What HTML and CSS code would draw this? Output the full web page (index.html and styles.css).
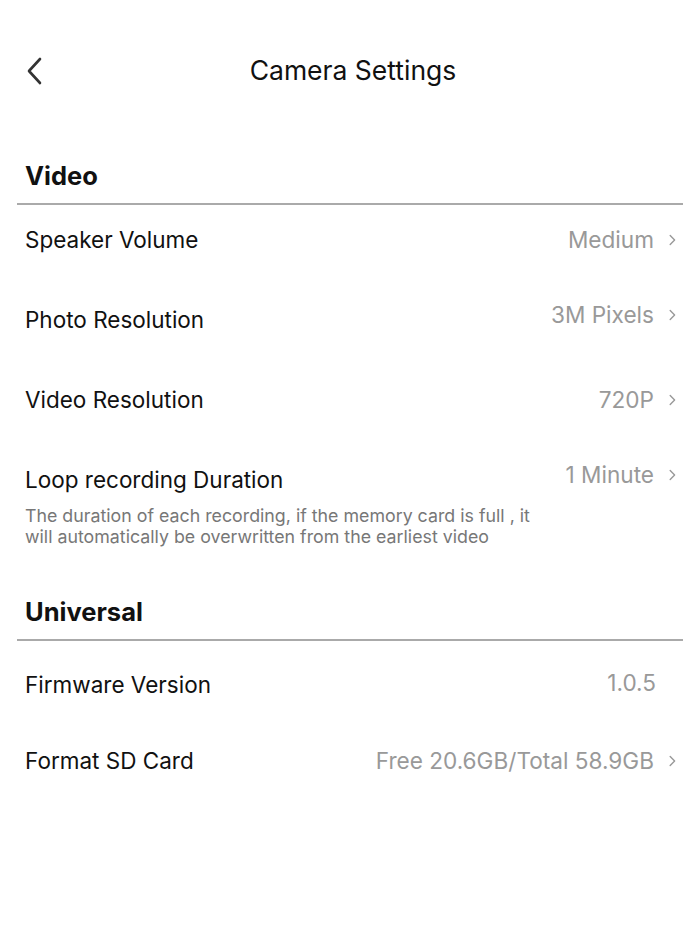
FILE: index.html
```html
<!DOCTYPE html>
<html lang="en">
<head>
    <meta charset="UTF-8">
    <meta name="viewport" content="width=device-width, initial-scale=1.0">
    <title>Camera Settings</title>
    <link rel="stylesheet" href="styles.css">
</head>
<body>
    <div class="header">
        <button class="back" aria-label="Back">
            <svg width="16" height="28" viewBox="0 0 16 28">
                <path d="M14 2 L3 14 L14 26" fill="none" stroke="#333" stroke-width="2.6" stroke-linecap="round" stroke-linejoin="round"/>
            </svg>
        </button>
        <h1>Camera Settings</h1>
    </div>

    <div class="section">
        <h2>Video</h2>
        <div class="row">
            <span class="label">Speaker Volume</span>
            <span class="value">Medium <svg class="chev" viewBox="0 0 7 12"><path d="M1.2 1.5 L5.6 6 L1.2 10.5"/></svg></span>
        </div>
        <div class="row">
            <span class="label">Photo Resolution</span>
            <span class="value up">3M Pixels <svg class="chev" viewBox="0 0 7 12"><path d="M1.2 1.5 L5.6 6 L1.2 10.5"/></svg></span>
        </div>
        <div class="row">
            <span class="label">Video Resolution</span>
            <span class="value">720P <svg class="chev" viewBox="0 0 7 12"><path d="M1.2 1.5 L5.6 6 L1.2 10.5"/></svg></span>
        </div>
        <div class="row tall">
            <div class="label-wrap">
                <span class="label">Loop recording Duration</span>
                <p class="note">The duration of each recording, if the memory card is full , it will automatically be overwritten from the earliest video</p>
            </div>
            <span class="value up">1 Minute <svg class="chev" viewBox="0 0 7 12"><path d="M1.2 1.5 L5.6 6 L1.2 10.5"/></svg></span>
        </div>
    </div>

    <div class="section">
        <h2>Universal</h2>
        <div class="row short">
            <span class="label">Firmware Version</span>
            <span class="value nochev">1.0.5</span>
        </div>
        <div class="row short">
            <span class="label">Format SD Card</span>
            <span class="value">Free 20.6GB/Total 58.9GB <svg class="chev" viewBox="0 0 7 12"><path d="M1.2 1.5 L5.6 6 L1.2 10.5"/></svg></span>
        </div>
    </div>
</body>
</html>
```

FILE: styles.css
```css
body {
    margin: 0;
    background: #fff;
    font-family: 'Inter', 'Noto Sans', sans-serif;
    color: #111;
}

.header {
    height: 140px;
    display: flex;
    align-items: center;
    justify-content: center;
    position: relative;
}

.header h1 {
    margin: 0;
    padding-left: 6px;
    font-size: 26.5px;
    font-weight: 400;
    color: #111;
}

.back {
    position: absolute;
    left: 26px;
    top: 57px;
    padding: 0;
    border: none;
    background: none;
    display: flex;
}

.section {
    margin: 0 17px;
}

.section h2 {
    margin: 0;
    padding: 20px 8px 11px;
    line-height: 32px;
    font-size: 25.5px;
    font-weight: 700;
    border-bottom: 2px solid #aaa;
}

.row {
    display: flex;
    justify-content: space-between;
    align-items: flex-start;
    padding: 24px 6px 34px 8px;
    line-height: 22px;
}

.row.tall {
    padding-bottom: 29px;
}

.row.short {
    padding-top: 33px;
    padding-bottom: 21px;
}

.label {
    font-size: 22.5px;
    color: #111;
}

.note {
    margin: 12px 0 0;
    font-size: 17.8px;
    line-height: 21px;
    color: #777;
    max-width: 522px;
}

.value {
    font-size: 22.6px;
    color: #999;
    display: flex;
    align-items: center;
    white-space: nowrap;
}

.value.up {
    margin-top: -5px;
}

.value.nochev {
    padding-right: 21px;
    margin-top: -2px;
}

.chev {
    width: 7px;
    height: 12px;
    margin-left: 15px;
    margin-right: 1px;
    fill: none;
    stroke: #999;
    stroke-width: 1.4;
    stroke-linecap: round;
    stroke-linejoin: round;
}
```
